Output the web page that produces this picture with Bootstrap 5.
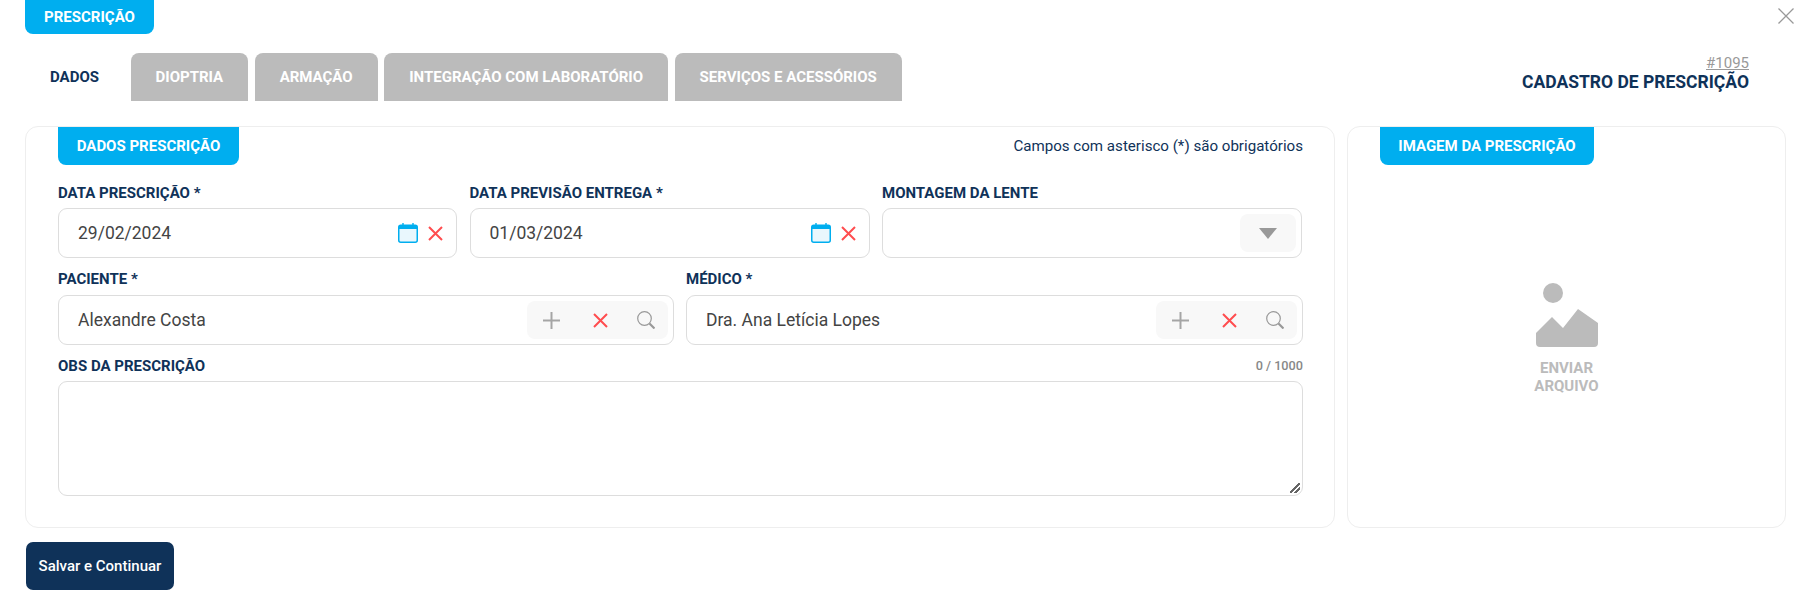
<!DOCTYPE html>
<html lang="pt-BR">
<head>
<meta charset="utf-8">
<title>Cadastro de Prescrição</title>
<link href="https://cdn.jsdelivr.net/npm/bootstrap@5.3.0/dist/css/bootstrap.min.css" rel="stylesheet">
<style>
body{font-family:Roboto,"Liberation Sans",sans-serif;background:#fff;color:#0f3259;height:611px;overflow:hidden}
.shell{padding:0 24px 0 25px;position:relative}
.ribbon{background:#00aeef;color:#fff;font-size:15px;font-weight:700;display:inline-flex;align-items:center;justify-content:center;border-radius:0 0 8px 8px;text-transform:uppercase}
.ribbon-top{height:34px;width:129px}
.ribbon-data{height:38px;width:181px}
.ribbon-image{height:38px;width:214px}
.close-x{position:absolute;top:8px;right:16px;width:16px;height:16px;border:0;background:none;padding:0;display:flex}
.tabs-row{margin-top:19px;height:48px}
.tabs-list{gap:6.5px}
.tab-link{height:48px;padding:0 25px;font-size:15px;font-weight:700;color:#fff;background:#bbb;border-radius:8px 8px 0 0;display:flex;align-items:center;text-decoration:none}
.tab-link.is-current{background:#fff;color:#0f3259}
.title-box{text-align:right;padding-right:37px;line-height:1;margin-top:2px}
.record-no{font-size:15px;color:#999;text-decoration:underline;display:block;line-height:16px}
.record-title{font-size:17.5px;font-weight:700;color:#0f3259;line-height:22px}
.panels{margin-top:25px;gap:12px;height:401.5px}
.panel-main{width:1310px;border:1px solid #eee;border-radius:13px;padding:0 31px 31px 32px}
.panel-image{width:439px;border:1px solid #eee;border-radius:13px;padding:0 32px}
.required-note{font-size:15.12px;color:#0f3259}
.fields-a{display:grid;grid-template-columns:399px 400px 1fr;column-gap:12.5px;margin-top:7px;margin-right:1px}
.fields-b{display:grid;grid-template-columns:615.5px 1fr;column-gap:12.5px;margin-top:1px}
.fields-a .field-label,.fields-c .field-label{padding-bottom:5px}
.field-label{height:36px;padding-bottom:6px;font-size:15px;font-weight:700;line-height:20px;margin:0;display:flex;justify-content:space-between;align-items:flex-end;text-transform:uppercase;color:#0f3259}
.count{font-size:12.7px;font-weight:500;color:#888}
.field-box{height:50px;border:1px solid #ddd;border-radius:9px;padding:0 5px 0 19px;font-size:17.5px;color:#444;background:#fff;display:flex;align-items:center;justify-content:space-between}
.date-tools{display:flex;align-items:center;gap:10px;padding-right:8px}
.tool-group{height:38px;background:#f8f8f8;border-radius:8px;display:flex;align-items:center}
.tool-search{width:141px;justify-content:space-between;padding:0 13px 0 16px}
.tool-search .tool-x{margin-left:4px}
.tool-caret{width:56px;justify-content:center}
.note-area{height:115px;border:1px solid #ddd;border-radius:9px;resize:both;box-shadow:none}
.note-area::-webkit-resizer{background:linear-gradient(135deg,transparent 0 44%,#666 44% 56%,transparent 56% 70%,#666 70% 82%,transparent 82%) no-repeat right 2px bottom 2px/10px 10px}
.upload-box{padding-top:118px;color:#bbb;font-size:15px;font-weight:700;line-height:18px;text-align:center}
.upload-box svg{display:block;margin:0 auto 12px}
.btn-save{background:#0f3259;color:#fff;font-size:15px;font-weight:500;height:48px;width:148px;border-radius:7px;border:0;margin:14.5px 0 0 1px;padding:0}
.btn-save:hover{background:#0f3259;color:#fff}
</style>
</head>
<body>
<div class="shell">
  <span class="ribbon ribbon-top">Prescrição</span>
  <button class="close-x" type="button" aria-label="Fechar"><svg width="16" height="16" viewBox="0 0 16 16"><path d="M.5.5l15 15M15.5.5l-15 15" stroke="#999" stroke-width="1.3" fill="none"/></svg></button>

  <div class="d-flex justify-content-between align-items-start tabs-row">
    <nav class="d-flex tabs-list">
      <a class="tab-link is-current" href="#">DADOS</a>
      <a class="tab-link" href="#">DIOPTRIA</a>
      <a class="tab-link" href="#">ARMAÇÃO</a>
      <a class="tab-link" href="#">INTEGRAÇÃO COM LABORATÓRIO</a>
      <a class="tab-link" href="#">SERVIÇOS E ACESSÓRIOS</a>
    </nav>
    <div class="title-box">
      <a class="record-no" href="#">#1095</a>
      <div class="record-title">CADASTRO DE PRESCRIÇÃO</div>
    </div>
  </div>

  <div class="d-flex panels">
    <section class="panel-main">
      <div class="d-flex justify-content-between align-items-center">
        <span class="ribbon ribbon-data">Dados Prescrição</span>
        <span class="required-note">Campos com asterisco (*) são obrigatórios</span>
      </div>

      <div class="fields-a">
        <div>
          <div class="field-label">Data Prescrição *</div>
          <div class="field-box"><span>29/02/2024</span>
            <span class="date-tools">
              <svg width="20" height="20" viewBox="0 0 20 20"><rect x=".75" y="2.25" width="18.5" height="17" rx="2" fill="#e9f7fd" stroke="#00aeef" stroke-width="1.5"/><path d="M1 2.5h18V6H1z" fill="#00aeef"/><path d="M5 0v3M15 0v3" stroke="#00aeef" stroke-width="1.4"/></svg>
              <svg width="15" height="15" viewBox="0 0 15 15"><path d="M1 1l13 13M14 1L1 14" stroke="#ff4d4f" stroke-width="2" fill="none"/></svg>
            </span>
          </div>
        </div>
        <div>
          <div class="field-label">Data Previsão Entrega *</div>
          <div class="field-box"><span>01/03/2024</span>
            <span class="date-tools">
              <svg width="20" height="20" viewBox="0 0 20 20"><rect x=".75" y="2.25" width="18.5" height="17" rx="2" fill="#e9f7fd" stroke="#00aeef" stroke-width="1.5"/><path d="M1 2.5h18V6H1z" fill="#00aeef"/><path d="M5 0v3M15 0v3" stroke="#00aeef" stroke-width="1.4"/></svg>
              <svg width="15" height="15" viewBox="0 0 15 15"><path d="M1 1l13 13M14 1L1 14" stroke="#ff4d4f" stroke-width="2" fill="none"/></svg>
            </span>
          </div>
        </div>
        <div>
          <div class="field-label">Montagem da Lente</div>
          <div class="field-box"><span></span>
            <span class="tool-group tool-caret"><svg width="18" height="11" viewBox="0 0 18 11"><path d="M0 0h18l-9 11z" fill="#999"/></svg></span>
          </div>
        </div>
      </div>

      <div class="fields-b">
        <div>
          <div class="field-label">Paciente *</div>
          <div class="field-box"><span>Alexandre Costa</span>
            <span class="tool-group tool-search">
              <svg width="17" height="17" viewBox="0 0 17 17"><path d="M8.5 0v17M0 8.5h17" stroke="#a5a5a5" stroke-width="2" fill="none"/></svg>
              <svg class="tool-x" width="15" height="15" viewBox="0 0 15 15"><path d="M1 1l13 13M14 1L1 14" stroke="#ff4d4f" stroke-width="2" fill="none"/></svg>
              <svg width="18" height="18" viewBox="0 0 18 18"><circle cx="7.5" cy="7.5" r="6.8" fill="none" stroke="#999" stroke-width="1.2"/><path d="M12.5 12.5L17.5 17.5" stroke="#999" stroke-width="2.2"/></svg>
            </span>
          </div>
        </div>
        <div>
          <div class="field-label">Médico *</div>
          <div class="field-box"><span>Dra. Ana Letícia Lopes</span>
            <span class="tool-group tool-search">
              <svg width="17" height="17" viewBox="0 0 17 17"><path d="M8.5 0v17M0 8.5h17" stroke="#a5a5a5" stroke-width="2" fill="none"/></svg>
              <svg class="tool-x" width="15" height="15" viewBox="0 0 15 15"><path d="M1 1l13 13M14 1L1 14" stroke="#ff4d4f" stroke-width="2" fill="none"/></svg>
              <svg width="18" height="18" viewBox="0 0 18 18"><circle cx="7.5" cy="7.5" r="6.8" fill="none" stroke="#999" stroke-width="1.2"/><path d="M12.5 12.5L17.5 17.5" stroke="#999" stroke-width="2.2"/></svg>
            </span>
          </div>
        </div>
      </div>

      <div class="fields-c">
        <div class="field-label"><span>Obs da Prescrição</span><span class="count">0 / 1000</span></div>
        <textarea class="form-control note-area" aria-label="Obs da prescrição"></textarea>
      </div>
    </section>

    <section class="panel-image">
      <span class="ribbon ribbon-image">Imagem da Prescrição</span>
      <div class="upload-box">
        <svg width="62" height="64" viewBox="0 0 62 64"><circle cx="17" cy="10" r="10" fill="#bbb"/><path d="M0 50L16 34 27 45 42 26 62 40V60a4 4 0 0 1-4 4H4a4 4 0 0 1-4-4z" fill="#bbb"/></svg>
        ENVIAR<br>ARQUIVO
      </div>
    </section>
  </div>

  <button class="btn btn-save" type="button">Salvar e Continuar</button>
</div>
</body>
</html>
